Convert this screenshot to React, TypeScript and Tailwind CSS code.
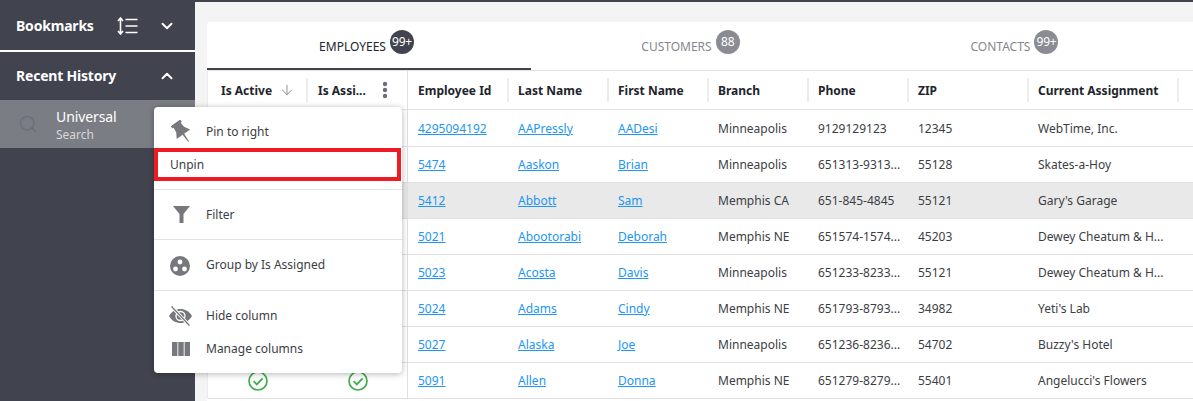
import { ArrowDown, ChevronDown, ChevronUp, Search } from "lucide-react";

const rows = [
  ["4295094192", "AAPressly", "AADesi", "Minneapolis", "9129129123", "12345", "WebTime, Inc."],
  ["5474", "Aaskon", "Brian", "Minneapolis", "651313-9313...", "55128", "Skates-a-Hoy"],
  ["5412", "Abbott", "Sam", "Memphis CA", "651-845-4845", "55121", "Gary's Garage"],
  ["5021", "Abootorabi", "Deborah", "Memphis NE", "651574-1574...", "45203", "Dewey Cheatum & H..."],
  ["5023", "Acosta", "Davis", "Minneapolis", "651233-8233...", "55121", "Dewey Cheatum & H..."],
  ["5024", "Adams", "Cindy", "Memphis NE", "651793-8793...", "34982", "Yeti's Lab"],
  ["5027", "Alaska", "Joe", "Minneapolis", "651236-8236...", "54702", "Buzzy's Hotel"],
  ["5091", "Allen", "Donna", "Memphis NE", "651279-8279...", "55401", "Angelucci's Flowers"],
];

const grid = "grid grid-cols-[100px_100px_100px_100px_100px_100px_100px_120px_150px_1fr]";

function Check() {
  return (
    <svg width="20" height="20" viewBox="0 0 20 20" fill="none" stroke="#3fae49" strokeWidth="1.7">
      <circle cx="10" cy="10" r="9" />
      <path d="M5.6 10.2l3.2 3.2 5.8-6" strokeWidth="1.8" />
    </svg>
  );
}

function Head({ label }: { label: string }) {
  return (
    <div className="flex items-center h-full pl-[10px]">
      <span className="font-bold text-[12px] text-[#22242c] whitespace-nowrap pt-[2px]">{label}</span>
      <span className="ml-auto -mr-px w-[2px] h-[24px] bg-[#ececec]" />
    </div>
  );
}

function Tab({ label, count, active }: { label: string; count: string; active?: boolean }) {
  return (
    <div className={`flex-1 flex items-start justify-center pt-[8px] pr-[5px] h-full border-b-2 ${active ? "border-[#41434e]" : "border-transparent"}`}>
      <span className={`text-[12px] mt-[8px] ${active ? "text-[#22242c]" : "text-[#85878d]"}`}>{label}</span>
      <span className={`ml-[4px] w-[24px] h-[24px] rounded-full flex items-center justify-center text-white text-[12px] tracking-[-0.3px] ${active ? "bg-[#41434e]" : "bg-[#8b8c93]"}`}>{count}</span>
    </div>
  );
}

function MenuItem({ icon, label }: { icon: React.ReactNode; label: string }) {
  return (
    <div className="flex items-center h-[33px]">
      <span className="w-[52px] flex justify-center shrink-0 pl-[1px]">{icon}</span>
      <span className="text-[12px] text-[#3c3e44]">{label}</span>
    </div>
  );
}

function Divider() {
  return <div className="h-px bg-[#e2e2e2]" />;
}

export default function App() {
  return (
    <div className="w-[1193px] h-[401px] overflow-hidden flex flex-col bg-[#f4f4f4] relative font-['Noto_Sans',sans-serif]">
      <div className="h-[2px] bg-[#41434e] shrink-0" />
      <div className="flex flex-1 min-h-0">
        <aside className="w-[195px] shrink-0 bg-[#41434e] text-white">
          <div className="h-[48px] flex items-center pl-[16px] pr-[19px]">
            <span className="font-bold text-[14px] tracking-[-0.2px] mb-[2px]">Bookmarks</span>
            <svg className="ml-[23px]" width="21" height="18" viewBox="0 0 21 18" fill="none" stroke="white" strokeWidth="1.6">
              <path d="M3.5 2v14M1 4l2.5-3L6 4M1 14l2.5 3L6 14" />
              <path d="M8.5 2.500h12M8.500 9h12M8.500 15.500h12" />
            </svg>
            <ChevronDown className="ml-auto" size={18} strokeWidth={2.6} />
          </div>
          <div className="h-[2px] bg-white" />
          <div className="h-[48px] flex items-center pl-[16px] pr-[19px]">
            <span className="font-bold text-[14px] tracking-[-0.2px] mb-[2px]">Recent History</span>
            <ChevronUp className="ml-auto" size={18} strokeWidth={2.6} />
          </div>
          <div className="h-[48px] bg-[#7b7d85] flex items-center pl-[18px]">
            <Search size={20} strokeWidth={2} className="text-[#6f7079]" />
            <div className="ml-[18px] flex flex-col pt-[2px]">
              <span className="text-[14px] tracking-[-0.1px] leading-[19px]">Universal</span>
              <span className="text-[12px] leading-[18px] text-[#d6d6d9]">Search</span>
            </div>
          </div>
        </aside>
        <main className="flex-1 min-w-0 pl-[12px] pt-[20px]">
          <div className="bg-white h-[500px] rounded-tl-[3px]">
            <div className="h-[48px] flex w-[972px]">
              <Tab label="EMPLOYEES" count="99+" active />
              <Tab label="CUSTOMERS" count="88" />
              <Tab label="CONTACTS" count="99+" />
            </div>
            <div className="border-t border-[#e2e2e2]">
              <div className="border-l border-[#ececec]">
                <div className={`${grid} h-[39px] border-b border-[#e0e0e0]`}>
                  <div className="flex items-center h-full pl-[13px]">
                    <span className="font-bold text-[12px] text-[#22242c] pt-[2px]">Is Active</span>
                    <ArrowDown size={16} strokeWidth={1.4} className="ml-[7px] text-[#8b8c93]" />
                    <span className="ml-auto w-[2px] h-[24px] bg-[#ececec]" />
                  </div>
                  <div className="flex items-center h-full pl-[10px] border-r border-[#e0e0e0]">
                    <span className="font-bold text-[12px] text-[#22242c] pt-[2px]">Is Assi...</span>
                    <svg className="ml-[16px]" width="6" height="18" viewBox="0 0 6 18" fill="#6d6e75">
                      <circle cx="3" cy="3" r="2.2" />
                      <circle cx="3" cy="9" r="2.2" />
                      <circle cx="3" cy="15" r="2.2" />
                    </svg>
                  </div>
                  {["Employee Id", "Last Name", "First Name", "Branch", "Phone", "ZIP", "Current Assignment"].map((h) => (
                    <Head key={h} label={h} />
                  ))}
                  <div />
                </div>
                {rows.map((r, idx) => (
                  <div key={r[0]} className={`${grid} ${idx === 0 ? "h-[37px]" : "h-[36px]"} border-b border-[#e0e0e0] ${r[0] === "5412" ? "bg-[#e9e9e9]" : ""} items-center text-[12px] text-[#3c3e44]`}>
                    <div className="flex justify-center"><Check /></div>
                    <div className="flex justify-center border-r border-[#e0e0e0] h-full items-center"><Check /></div>
                    {r.map((c, i) => (
                      <div key={i} className={`pl-[10px] pt-[1px] whitespace-nowrap ${i < 3 ? "text-[#2196f3] underline" : ""}`}>{c}</div>
                    ))}
                    <div />
                  </div>
                ))}
              </div>
            </div>
          </div>
        </main>
      </div>

      <div className="absolute left-[154px] top-[107px] w-[248px] h-[266px] bg-white rounded-[4px] shadow-[0_1px_6px_rgba(0,0,0,0.3)]">
        <div className="h-[41px] flex items-center pt-[8px]">
          <span className="w-[52px] flex justify-center shrink-0 pl-[3px]">
            <svg width="23" height="23" viewBox="0 0 24 24" fill="#77787d">
              <g transform="rotate(-35 12 12)">
                <path d="M6 1h12v3h-1.500L17 9.500L20.500 15.500H3.500L7 9.500L7.500 4H6z" />
                <path d="M11 15h2L12.400 25h-0.800z" />
              </g>
            </svg>
          </span>
          <span className="text-[12px] text-[#3c3e44]">Pin to right</span>
        </div>
        <div className="h-[33px] border-4 border-[#ed1c24] flex items-center pl-[12px] mr-[1px]">
          <span className="text-[12px] text-[#3c3e44] mt-[1px]">Unpin</span>
        </div>
        <div className="h-[8px]" />
        <Divider />
        <div className="h-[49px] flex items-center">
          <span className="w-[52px] flex justify-center shrink-0 pl-[2px]">
            <svg width="17" height="17" viewBox="0 0 17 17" fill="#77787d">
              <path d="M0 0h17L10.500 8v9h-4V8z" />
            </svg>
          </span>
          <span className="text-[12px] text-[#3c3e44]">Filter</span>
        </div>
        <Divider />
        <div className="h-[50px] flex items-center">
          <span className="w-[52px] flex justify-center shrink-0 pt-[1px]">
            <svg width="20" height="20" viewBox="0 0 20 20">
              <circle cx="10" cy="10" r="10" fill="#77787d" />
              <circle cx="10" cy="6" r="2.4" fill="white" />
              <circle cx="5.5" cy="13" r="2.4" fill="white" />
              <circle cx="14.5" cy="13" r="2.4" fill="white" />
            </svg>
          </span>
          <span className="text-[12px] text-[#3c3e44]">Group by Is Assigned</span>
        </div>
        <Divider />
        <div className="h-[8px]" />
        <MenuItem
          label="Hide column"
          icon={
            <svg width="23" height="20" viewBox="0 0 23 20">
              <path d="M0 10C3 5 7 3 11.500 3s8.500 2 11.500 7c-3 5-7 7-11.500 7S3 15 0 10z" fill="#77787d" />
              <circle cx="11.500" cy="10" r="4.500" fill="none" stroke="white" strokeWidth="1.300" />
              <path d="M2.500 0.500L20.500 19.500" stroke="white" strokeWidth="3.200" />
              <path d="M2.500 0.500L20.500 19.500" stroke="#77787d" strokeWidth="1.300" />
            </svg>
          }
        />
        <MenuItem
          label="Manage columns"
          icon={
            <svg width="18" height="14" viewBox="0 0 18 14" fill="#77787d">
              <rect x="0" width="5.400" height="14" />
              <rect x="6.300" width="5.400" height="14" />
              <rect x="12.600" width="5.400" height="14" />
            </svg>
          }
        />
      </div>
    </div>
  );
}
